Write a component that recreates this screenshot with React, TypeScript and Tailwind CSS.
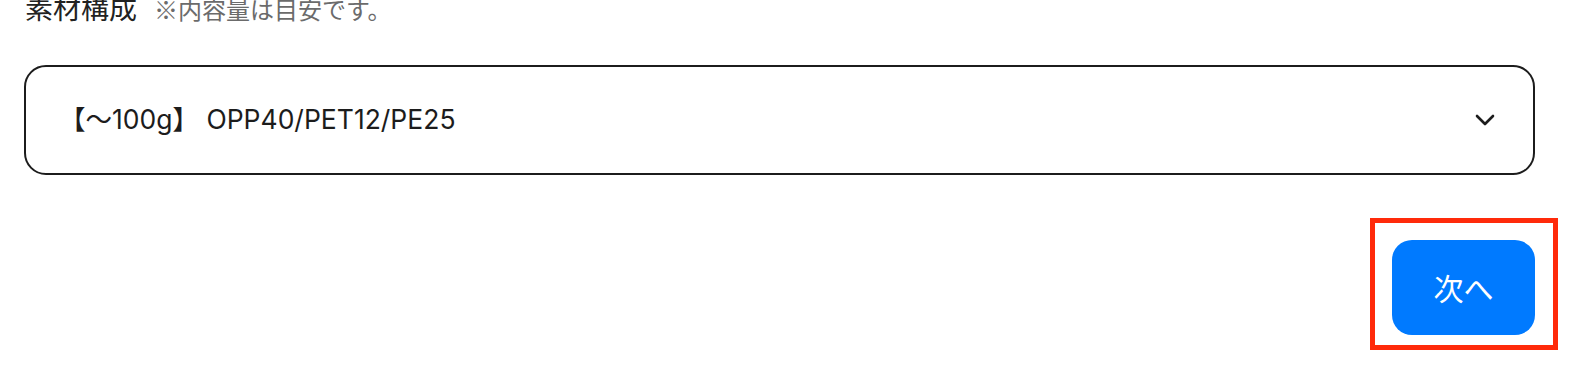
import React from "react";

export default function App() {
  return (
    <div
      className="relative h-[366px] w-full overflow-hidden bg-white"
      style={{ fontFamily: '"Inter", "Noto Sans CJK JP", sans-serif' }}
    >
      <div className="pl-[24px] pr-[45px]">
        <div
          className="-mt-[9px] flex items-baseline gap-[17px] pl-[1px]"
          style={{ fontFamily: '"Noto Sans CJK JP", sans-serif' }}
        >
          <span className="text-[28px] leading-[32px] text-[#222222]">素材構成</span>
          <span className="text-[24px] leading-[32px] text-[#6b6b6b]">※内容量は目安です。</span>
        </div>

        <div className="mt-[40px] flex h-[110px] items-center justify-between rounded-[22px] border-2 border-[#1c1c1c] pl-[33px] pr-[38px]">
          <span className="text-[26.5px] text-[#1c1c1c]">【～100g】 OPP40/PET12/PE25</span>
          <svg width="20" height="12" viewBox="0 0 20 12" fill="none">
            <path d="M2 2 L10 10 L18 2" stroke="#1c1c1c" strokeWidth="2.6" strokeLinecap="round" strokeLinejoin="round" />
          </svg>
        </div>

        <div className="mt-[65px] flex justify-end">
          <div className="relative">
            <button
              className="flex h-[95px] w-[143px] items-center justify-center rounded-[20px] bg-[#007aff] text-[30px] text-white"
              style={{ fontFamily: '"Noto Sans CJK JP", sans-serif' }}
            >
              次へ
            </button>
            <span className="pointer-events-none absolute -bottom-[15px] -left-[22px] -right-[23px] -top-[22px] border-[5px] border-[#ff2a0a]" />
          </div>
        </div>
      </div>
    </div>
  );
}
